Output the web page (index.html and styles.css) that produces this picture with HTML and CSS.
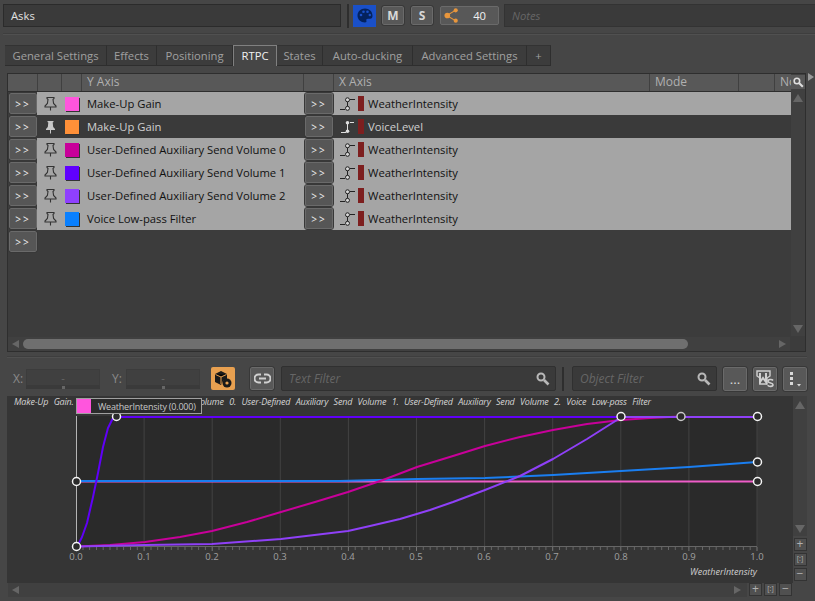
FILE: index.html
```html
<!DOCTYPE html>
<html lang="en">

<head>
    <meta charset="UTF-8">
    <meta name="viewport" content="width=device-width, initial-scale=1.0">
    <title>RTPC</title>
    <link rel="stylesheet" href="styles.css">
</head>

<body>
    <svg class="icon-defs" width="0" height="0">
        <symbol id="pin" viewBox="0 0 15 15">
            <path d="M4 1.500h7v1l-1 1 .6 4 2.400 2.500v1H2v-1l2.400-2.500.6-4-1-1zM7.500 11v3.500" fill="none" stroke="currentColor" stroke-width="1.100"/>
        </symbol>
        <symbol id="pin-solid" viewBox="0 0 15 15">
            <path d="M4.500 2h6v1l-.8.6.5 4.400 1.800 2v1H3v-1l1.800-2 .5-4.400-.8-.6zM7 11h1v3.500H7z" fill="currentColor"/>
        </symbol>
        <symbol id="curve" viewBox="0 0 16 14">
            <path d="M0 12.500h5M10 2.500h5M7.500 3v8" fill="none" stroke="#222" stroke-width="1"/>
            <circle cx="7.500" cy="2.800" r="2" fill="#d8d8d8" stroke="#222" stroke-width="1"/>
            <circle cx="7.500" cy="11.300" r="2" fill="#d8d8d8" stroke="#222" stroke-width="1"/>
        </symbol>
        <symbol id="curve-solid" viewBox="0 0 16 14">
            <path d="M1 12.500h5M10 2.500h4M7.500 3v8" fill="none" stroke="#e0e0e0" stroke-width="1"/>
            <circle cx="7.500" cy="2.800" r="1.800" fill="#e0e0e0"/>
            <circle cx="7.500" cy="11.300" r="1.800" fill="#e0e0e0"/>
        </symbol>
        <symbol id="search" viewBox="0 0 14 14">
            <circle cx="5" cy="5" r="3.500" fill="none" stroke="currentColor" stroke-width="2"/>
            <path d="M8 8l4.500 4.500" stroke="currentColor" stroke-width="2.600"/>
        </symbol>
    </svg>

    <div class="top-bar">
        <div class="name-field">Asks</div>
        <div class="v-sep"></div>
        <button class="btn-palette">
            <svg width="16" height="15" viewBox="0 0 16 15">
                <path d="M8 .5C3.800.5.500 3.500.500 7.500S3.800 14.500 8 14.500c1.300 0 1.700-.8 1.400-1.700-.4-1.100.2-2 1.400-2h2.400c1.500 0 2.300-1.200 2.300-3C15.500 3.500 12.200.5 8 .5z" fill="#04225e"/>
                <circle cx="4" cy="7" r="1.300" fill="#1a50c8"/>
                <circle cx="6.500" cy="3.700" r="1.300" fill="#1a50c8"/>
                <circle cx="10.500" cy="3.700" r="1.300" fill="#1a50c8"/>
                <circle cx="12.800" cy="7" r="1.200" fill="#1a50c8"/>
            </svg>
        </button>
        <button class="btn-tool btn-letter">M</button>
        <button class="btn-tool btn-letter btn-s">S</button>
        <div class="btn-voices">
            <svg width="15" height="15" viewBox="0 0 16 16">
                <path d="M3 8l10-6M3 8l10 6" stroke="#e8963c" stroke-width="1.200"/>
                <circle cx="3.500" cy="8" r="3" fill="#e8963c"/>
                <circle cx="12.500" cy="2.500" r="2.200" fill="#e8963c"/>
                <circle cx="12.500" cy="13.500" r="2.200" fill="#e8963c"/>
            </svg>
            <span>40</span>
        </div>
        <div class="notes-field">Notes</div>
    </div>

    <div class="h-line"></div>

    <div class="tabs">
        <div class="tab tab-general">General Settings</div>
        <div class="tab tab-effects">Effects</div>
        <div class="tab tab-position">Positioning</div>
        <div class="tab tab-rtpc active">RTPC</div>
        <div class="tab tab-states">States</div>
        <div class="tab tab-ducking">Auto-ducking</div>
        <div class="tab tab-advanced">Advanced Settings</div>
        <div class="tab tab-plus">+</div>
    </div>

    <div class="list-panel">
        <div class="list-main">
            <div class="list-cols">
                <div class="list-header">
                    <div class="hcell c-btn"></div>
                    <div class="hcell c-pin"></div>
                    <div class="hcell c-swatch"></div>
                    <div class="hcell c-y">Y Axis</div>
                    <div class="hcell c-btn2"></div>
                    <div class="hcell c-x">X Axis</div>
                    <div class="hcell c-mode">Mode</div>
                    <div class="hcell c-blank"></div>
                    <div class="hcell c-note">No</div>
                </div>
                <div class="row">
                    <button class="btn-more">&gt;&gt;</button>
                    <div class="row-body">
                        <svg class="pin"><use href="#pin"/></svg>
                        <span class="swatch swatch-pink"></span>
                        <span class="y-name">Make-Up Gain</span>
                        <button class="btn-more btn-more-x">&gt;&gt;</button>
                        <svg class="curve"><use href="#curve"/></svg>
                        <span class="rtpc-mark"></span>
                        <span class="x-name">WeatherIntensity</span>
                    </div>
                </div>
                <div class="row row-selected">
                    <button class="btn-more">&gt;&gt;</button>
                    <div class="row-body">
                        <svg class="pin"><use href="#pin-solid"/></svg>
                        <span class="swatch swatch-orange"></span>
                        <span class="y-name">Make-Up Gain</span>
                        <button class="btn-more btn-more-x">&gt;&gt;</button>
                        <svg class="curve"><use href="#curve-solid"/></svg>
                        <span class="rtpc-mark"></span>
                        <span class="x-name">VoiceLevel</span>
                    </div>
                </div>
                <div class="row">
                    <button class="btn-more">&gt;&gt;</button>
                    <div class="row-body">
                        <svg class="pin"><use href="#pin"/></svg>
                        <span class="swatch swatch-magenta"></span>
                        <span class="y-name">User-Defined Auxiliary Send Volume 0</span>
                        <button class="btn-more btn-more-x">&gt;&gt;</button>
                        <svg class="curve"><use href="#curve"/></svg>
                        <span class="rtpc-mark"></span>
                        <span class="x-name">WeatherIntensity</span>
                    </div>
                </div>
                <div class="row">
                    <button class="btn-more">&gt;&gt;</button>
                    <div class="row-body">
                        <svg class="pin"><use href="#pin"/></svg>
                        <span class="swatch swatch-violet"></span>
                        <span class="y-name">User-Defined Auxiliary Send Volume 1</span>
                        <button class="btn-more btn-more-x">&gt;&gt;</button>
                        <svg class="curve"><use href="#curve"/></svg>
                        <span class="rtpc-mark"></span>
                        <span class="x-name">WeatherIntensity</span>
                    </div>
                </div>
                <div class="row">
                    <button class="btn-more">&gt;&gt;</button>
                    <div class="row-body">
                        <svg class="pin"><use href="#pin"/></svg>
                        <span class="swatch swatch-purple"></span>
                        <span class="y-name">User-Defined Auxiliary Send Volume 2</span>
                        <button class="btn-more btn-more-x">&gt;&gt;</button>
                        <svg class="curve"><use href="#curve"/></svg>
                        <span class="rtpc-mark"></span>
                        <span class="x-name">WeatherIntensity</span>
                    </div>
                </div>
                <div class="row">
                    <button class="btn-more">&gt;&gt;</button>
                    <div class="row-body">
                        <svg class="pin"><use href="#pin"/></svg>
                        <span class="swatch swatch-blue"></span>
                        <span class="y-name">Voice Low-pass Filter</span>
                        <button class="btn-more btn-more-x">&gt;&gt;</button>
                        <svg class="curve"><use href="#curve"/></svg>
                        <span class="rtpc-mark"></span>
                        <span class="x-name">WeatherIntensity</span>
                    </div>
                </div>
                <div class="row row-empty">
                    <button class="btn-more">&gt;&gt;</button>
                </div>
            </div>
            <div class="list-vscroll">
                <div class="search-corner"><svg width="11" height="11"><use href="#search"/></svg></div>
                <div class="arrow-up"></div>
                <div class="spacer"></div>
                <div class="arrow-down"></div>
            </div>
        </div>
        <div class="list-hscroll">
            <div class="arrow-left"></div>
            <div class="hscroll-thumb"></div>
            <div class="spacer"></div>
            <div class="arrow-right"></div>
        </div>
    </div>
    <div class="side-arrow"></div>

    <div class="h-line h-line-mid"></div>

    <div class="graph-toolbar">
        <span class="coord-label">X:</span>
        <div class="coord-field">-</div>
        <span class="coord-label coord-label-y">Y:</span>
        <div class="coord-field">-</div>
        <button class="btn-orange">
            <svg width="18" height="18" viewBox="0 0 18 18">
                <path d="M1 4l6-3 6 3v5l-4 2-2 4-6-3z" fill="#1a1a1a"/>
                <path d="M1.500 4.500L7 7l5.500-2.500M7 7v7" stroke="#e8a050" stroke-width="1"/>
                <circle cx="13" cy="13" r="4.500" fill="#1a1a1a"/>
                <circle cx="13" cy="13" r="1.600" fill="#e8a050"/>
            </svg>
        </button>
        <button class="btn-tool btn-link">
            <svg width="17" height="11" viewBox="0 0 17 11">
                <path d="M7 1.500H4.500a4 4 0 0 0 0 8H7M10 1.500h2.500a4 4 0 0 1 0 8H10M5 5.500h7" fill="none" stroke="#d0d0d0" stroke-width="2"/>
            </svg>
        </button>
        <div class="filter filter-text">
            <span>Text Filter</span>
            <svg width="14" height="14"><use href="#search"/></svg>
        </div>
        <div class="v-sep v-sep-filter"></div>
        <div class="filter filter-object">
            <span>Object Filter</span>
            <svg width="14" height="14"><use href="#search"/></svg>
        </div>
        <button class="btn-tool btn-dots">...</button>
        <button class="btn-tool btn-ms">
            <svg width="18" height="18" viewBox="0 0 18 18">
                <path d="M1 1h13v5l-3 2v6H4V8L1 6z" fill="none" stroke="#d0d0d0" stroke-width="1.400"/>
                <path d="M4 3v9l3-4 3 4V3" fill="none" stroke="#d0d0d0" stroke-width="2"/>
                <path d="M17 10.500c-1-1.500-5-1.300-5 .7 0 2.300 5 1.300 5 3.500 0 2-4 2.200-5.300.5" fill="none" stroke="#d0d0d0" stroke-width="1.600"/>
            </svg>
        </button>
        <button class="btn-tool btn-menu">
            <svg width="14" height="16" viewBox="0 0 14 16">
                <rect x="2" y="1" width="3" height="3" fill="#d8d8d8"/>
                <rect x="2" y="6" width="3" height="3" fill="#d8d8d8"/>
                <rect x="2" y="11" width="3" height="3" fill="#d8d8d8"/>
                <path d="M9 13h4l-2 2.500z" fill="#d8d8d8"/>
            </svg>
        </button>
    </div>

    <div class="graph-panel">
        <div class="graph-main">
            <div class="graph-area">
                <svg class="graph-svg" width="786" height="187" viewBox="7 396 786 187">
                    <rect x="76" y="416" width="681" height="131" fill="#2a2a2a"/>
                    <path d="M144.100 416V547M212.200 416V547M280.300 416V547M348.400 416V547M416.500 416V547M484.600 416V547M552.700 416V547M620.800 416V547M688.900 416V547M757 416V547" stroke="#424242" stroke-width="1"/>
                    <path d="M76.500 416V547" stroke="#b4b4b4" stroke-width="1"/>
                    <path d="M76 546.500H757" stroke="#666" stroke-width="1"/>
                    <path d="M83 547v3M89.600 547v3M96.500 547v3M103.200 547v3M110 547v3M117 547v3M123.600 547v3M130.500 547v3M137.300 547v3M151 547v3M157.700 547v3M164.500 547v3M171.300 547v3M178 547v3M185 547v3M191.800 547v3M198.600 547v3M205.400 547v3M219 547v3M225.800 547v3M232.600 547v3M239.400 547v3M246.200 547v3M253 547v3M259.900 547v3M266.700 547v3M273.500 547v3M287.100 547v3M293.900 547v3M300.700 547v3M307.500 547v3M314.400 547v3M321.200 547v3M328 547v3M334.800 547v3M341.600 547v3M355.200 547v3M362 547v3M368.900 547v3M375.700 547v3M382.500 547v3M389.300 547v3M396.100 547v3M402.900 547v3M409.700 547v3M423.300 547v3M430.200 547v3M437 547v3M443.800 547v3M450.600 547v3M457.400 547v3M464.200 547v3M471 547v3M477.800 547v3M491.400 547v3M498.200 547v3M505 547v3M511.900 547v3M518.700 547v3M525.500 547v3M532.300 547v3M539.100 547v3M545.900 547v3M559.500 547v3M566.300 547v3M573.100 547v3M580 547v3M586.800 547v3M593.600 547v3M600.400 547v3M607.200 547v3M614 547v3M627.600 547v3M634.400 547v3M641.300 547v3M648.100 547v3M654.900 547v3M661.700 547v3M668.500 547v3M675.300 547v3M682.100 547v3M695.700 547v3M702.500 547v3M709.400 547v3M716.200 547v3M723 547v3M729.800 547v3M736.600 547v3M743.400 547v3M750.200 547v3" stroke="#666"/>
                    <path d="M144.100 547v4M212.200 547v4M280.300 547v4M348.400 547v4M416.500 547v4M484.600 547v4M552.700 547v4M620.800 547v4M688.900 547v4M757 547v4" stroke="#777"/>

                    <path d="M76 481.500H757" class="curve-line" stroke="#ee5cc8"/>
                    <polyline points="76,481 340,481 417,479 485,478 553,475 621,471 689,467 757,462" class="curve-line" stroke="#1a7ef0"/>
                    <polyline points="77,546.500 110,545 145,542 180,537 212,531 247,522 281,512 315,502 348,492 383,480 417,467 453,456 485,446 520,437 553,430 587,424 621,420 650,418 680,416.500" class="curve-line" stroke="#c8009a"/>
                    <polyline points="77,547 82,537 87,523 93,497 98,473 103,447 108,428 113,418 117,417 621,417" class="curve-line" stroke="#6000f8"/>
                    <polyline points="77,546.500 145,545 212,544 281,539 348,531 370,526 400,519 430,510 453,502 485,490 520,476 553,459 587,439 617,420 621,417 757,417" class="curve-line" stroke="#8f40f8"/>

                    <circle cx="76.500" cy="481.500" r="4" class="point"/>
                    <circle cx="76.500" cy="546.500" r="4" class="point"/>
                    <circle cx="116.500" cy="416.500" r="4" class="point"/>
                    <circle cx="621" cy="416.500" r="4" class="point"/>
                    <circle cx="681" cy="416.500" r="4" class="point point-dim"/>
                    <circle cx="757.500" cy="416.500" r="4" class="point"/>
                    <circle cx="757.500" cy="462" r="4" class="point"/>
                    <circle cx="757.500" cy="481.500" r="4" class="point"/>

                    <text x="76" y="560" class="axis-num" text-anchor="middle">0.0</text>
                    <text x="144" y="560" class="axis-num" text-anchor="middle">0.1</text>
                    <text x="212" y="560" class="axis-num" text-anchor="middle">0.2</text>
                    <text x="280" y="560" class="axis-num" text-anchor="middle">0.3</text>
                    <text x="348" y="560" class="axis-num" text-anchor="middle">0.4</text>
                    <text x="416" y="560" class="axis-num" text-anchor="middle">0.5</text>
                    <text x="484" y="560" class="axis-num" text-anchor="middle">0.6</text>
                    <text x="552" y="560" class="axis-num" text-anchor="middle">0.7</text>
                    <text x="621" y="560" class="axis-num" text-anchor="middle">0.8</text>
                    <text x="689" y="560" class="axis-num" text-anchor="middle">0.9</text>
                    <text x="757" y="560" class="axis-num" text-anchor="middle">1.0</text>
                    <text x="757" y="575" class="axis-title" text-anchor="end">WeatherIntensity</text>
                </svg>
                <div class="legend">Make-Up Gain. User-Defined Auxiliary Send Volume 0. User-Defined Auxiliary Send Volume 1. User-Defined Auxiliary Send Volume 2. Voice Low-pass Filter</div>
                <div class="point-tip">
                    <span class="tip-swatch"></span>
                    <span>WeatherIntensity (0.000)</span>
                </div>
            </div>
            <div class="graph-hscroll">
                <div class="arrow-left"></div>
                <div class="spacer"></div>
                <div class="arrow-right"></div>
                <div class="graph-zoom-row">
                    <div class="zoom-btn">+</div>
                    <div class="zoom-btn zoom-fit">[:]</div>
                    <div class="zoom-btn">&minus;</div>
                </div>
            </div>
        </div>
        <div class="graph-side">
            <div class="graph-vscroll">
                <div class="arrow-up"></div>
                <div class="spacer"></div>
                <div class="arrow-down"></div>
            </div>
            <div class="zoom-btn">+</div>
            <div class="zoom-btn zoom-fit">[:]</div>
            <div class="zoom-btn">&minus;</div>
        </div>
    </div>
</body>

</html>
```

FILE: styles.css
```css
* {
    box-sizing: border-box;
}

body {
    font-family: "Open Sans", "Noto Sans", sans-serif;
    font-size: 11.25px;
    background-color: #464646;
    color: #c8c8c8;
    margin: 0;
    width: 815px;
    height: 601px;
    overflow: hidden;
    position: relative;
}

button {
    font-family: inherit;
    padding: 0;
    margin: 0;
}

.icon-defs {
    position: absolute;
}

.spacer {
    flex: 1;
}

/* top bar */
.top-bar {
    display: flex;
    align-items: center;
    height: 31px;
    padding: 0 0 0 3px;
}

.name-field {
    width: 338px;
    height: 23px;
    line-height: 21px;
    padding-left: 7px;
    background-color: #3a3a3a;
    border: 1px solid #2b2b2b;
    color: #e0e0e0;
}

.v-sep {
    width: 2px;
    height: 24px;
    background-color: #2e2e2e;
    margin: 0 4px 0 6px;
}

.btn-palette {
    width: 23px;
    height: 22px;
    background-color: #1a50c8;
    border: none;
    display: flex;
    align-items: center;
    justify-content: center;
}

.btn-tool {
    background-color: #585858;
    border: 1px solid #6a6a6a;
    outline: 1px solid #383838;
    outline-offset: 0;
    border-radius: 2px;
    color: #d8d8d8;
    display: flex;
    align-items: center;
    justify-content: center;
}

.btn-letter {
    width: 22px;
    height: 19px;
    margin-left: 6px;
    font-weight: 700;
    font-size: 12px;
}

.btn-s {
    margin-left: 7px;
}

.btn-voices {
    width: 59px;
    height: 19px;
    margin-left: 7px;
    padding: 0 12px 0 3px;
    display: flex;
    align-items: center;
    justify-content: space-between;
    background-color: #585858;
    border: 1px solid #6a6a6a;
    border-radius: 2px;
    color: #f0f0f0;
}

.notes-field {
    flex: 1;
    height: 23px;
    margin-left: 5px;
    padding-left: 7px;
    line-height: 21px;
    background-color: #3a3a3a;
    border: 1px solid #333;
    border-right: none;
    color: #666;
    font-style: italic;
}

.h-line {
    height: 2px;
    margin: 2px 0 0 3px;
    background-color: #3e3e3e;
    border-bottom: 1px solid #505050;
}

/* tabs */
.tabs {
    display: flex;
    height: 21px;
    margin-top: 10px;
    padding-left: 5px;
}

.tab {
    height: 21px;
    line-height: 20px;
    text-align: center;
    background-color: #3c3c3c;
    border-top: 1px solid #333;
    border-right: 1px solid #2e2e2e;
    border-bottom: 1px solid #2e2e2e;
    color: #a0a0a0;
}

.tab.active {
    background-color: #464646;
    border: 1px solid #808080;
    border-bottom: none;
    color: #f0f0f0;
}

.tab-general { width: 102px; }
.tab-effects { width: 50px; }
.tab-position { width: 76px; }
.tab-rtpc { width: 44px; }
.tab-states { width: 46px; }
.tab-ducking { width: 90px; }
.tab-advanced { width: 114px; }
.tab-plus { width: 24px; }

/* rtpc list */
.list-panel {
    margin: 7px 9px 0 7px;
    height: 279px;
    background-color: #3c3c3c;
    border: 1px solid #2e2e2e;
}

.list-main {
    display: flex;
    height: 262px;
}

.list-cols {
    flex: 1;
    min-width: 0;
    overflow: hidden;
}

.list-header {
    display: flex;
    height: 18px;
    background-color: #585858;
    border-bottom: 1px solid #2e2e2e;
}

.hcell {
    flex: none;
    height: 17px;
    line-height: 16px;
    font-size: 12px;
    color: #b0b0b0;
    border-right: 1px solid #404040;
    padding-left: 5px;
    overflow: hidden;
}

.c-btn { width: 30px; }
.c-pin { width: 24px; }
.c-swatch { width: 20px; }
.c-y { width: 222px; }
.c-btn2 { width: 30px; }
.c-x { width: 316px; }
.c-mode { width: 89px; }
.c-blank { width: 36px; }
.c-note { width: 20px; border-right: none; }

.row {
    display: flex;
    height: 23px;
}

.row-body {
    flex: 1;
    display: flex;
    align-items: center;
    height: 23px;
    background-color: #a5a5a5;
    color: #111;
}

.row-selected .row-body {
    background-color: #3a3a3a;
    color: #d0d0d0;
}

.btn-more {
    flex: none;
    width: 28px;
    height: 21px;
    margin: 1px 0 0 1px;
    background-color: #565656;
    border: 1px solid #6a6a6a;
    outline: 1px solid #383838;
    border-radius: 2px;
    color: #f0f0f0;
    font-size: 10px;
    letter-spacing: 2px;
    line-height: 18px;
}

.pin {
    width: 15px;
    height: 15px;
    margin-left: 6px;
    color: #333;
}

.row-selected .pin {
    color: #c8c8c8;
}

.swatch {
    width: 14px;
    height: 14px;
    margin-left: 7px;
    box-shadow: 1px 1px 0 #333;
}

.swatch-pink { background-color: #ff55dd; }
.swatch-orange { background-color: #ff9038; }
.swatch-magenta { background-color: #c8009a; }
.swatch-violet { background-color: #6000ff; }
.swatch-purple { background-color: #8f40ff; }
.swatch-blue { background-color: #0a80ff; }

.y-name {
    width: 218px;
    margin-left: 8px;
    white-space: nowrap;
}

.btn-more-x {
    margin: 0;
}

.curve {
    width: 16px;
    height: 14px;
    margin-left: 7px;
}

.rtpc-mark {
    width: 6px;
    height: 15px;
    margin-left: 2px;
    background-color: #7d1f1f;
}

.x-name {
    margin-left: 4px;
}

.list-vscroll {
    width: 14px;
    display: flex;
    flex-direction: column;
    align-items: center;
    background-color: #404040;
}

.search-corner {
    width: 14px;
    height: 14px;
    margin-top: 1px;
    display: flex;
    align-items: center;
    justify-content: center;
    background-color: #585858;
    color: #e0e0e0;
}

.side-arrow {
    position: absolute;
    left: 808px;
    top: 73px;
    width: 0;
    height: 0;
    border-top: 4px solid transparent;
    border-bottom: 4px solid transparent;
    border-left: 6px solid #999;
}

.arrow-up,
.arrow-down {
    width: 0;
    height: 0;
    border-left: 5px solid transparent;
    border-right: 5px solid transparent;
}

.arrow-up {
    margin-top: 5px;
    border-bottom: 8px solid #666;
}

.arrow-down {
    margin-bottom: 3px;
    border-top: 8px solid #666;
}

.list-hscroll,
.graph-hscroll {
    display: flex;
    align-items: center;
    height: 14px;
    background-color: #404040;
}

.list-hscroll {
    margin-top: 1px;
    margin-right: 15px;
}

.arrow-left,
.arrow-right {
    width: 0;
    height: 0;
    border-top: 4px solid transparent;
    border-bottom: 4px solid transparent;
}

.arrow-left {
    margin-left: 4px;
    border-right: 7px solid #666;
}

.arrow-right {
    margin-right: 4px;
    border-left: 7px solid #666;
}

.hscroll-thumb {
    width: 665px;
    height: 10px;
    margin-left: 4px;
    border-radius: 5px;
    background-color: #6f6f6f;
}

.h-line-mid {
    margin: 4px 8px 0 7px;
}

/* graph toolbar */
.graph-toolbar {
    display: flex;
    align-items: center;
    height: 25px;
    margin-top: 8px;
    padding-left: 13px;
}

.coord-label {
    width: 13px;
    font-size: 12px;
    color: #8a8a8a;
}

.coord-label-y {
    width: 14px;
    margin-left: 12px;
}

.coord-field {
    position: relative;
    width: 74px;
    height: 20px;
    text-align: center;
    line-height: 15px;
    color: #666;
    background-color: #404040;
    border: 1px solid #3c3c3c;
    border-bottom: 4px solid #3a3a3a;
}

.coord-field::after {
    content: "";
    position: absolute;
    left: 35px;
    bottom: -4px;
    width: 3px;
    height: 3px;
    background-color: #666;
}

.btn-orange {
    width: 24px;
    height: 23px;
    margin-left: 11px;
    background-color: #e8a050;
    border: none;
    border-radius: 2px;
    display: flex;
    align-items: center;
    justify-content: center;
}

.btn-link {
    width: 24px;
    height: 23px;
    margin-left: 15px;
}

.filter {
    height: 25px;
    display: flex;
    align-items: center;
    justify-content: space-between;
    padding: 0 5px 0 7px;
    background-color: #3a3a3a;
    border: 1px solid #303030;
    border-radius: 2px;
    color: #666;
    font-size: 12px;
    font-style: italic;
}

.filter svg {
    color: #b8b8b8;
}

.filter-text {
    width: 275px;
    margin-left: 7px;
}

.v-sep-filter {
    margin: 0 8px 0 6px;
}

.filter-object {
    width: 145px;
}

.btn-dots,
.btn-ms,
.btn-menu {
    width: 24px;
    height: 24px;
    margin-left: 6px;
}

/* graph */
.graph-panel {
    display: flex;
    height: 201px;
    margin: 5px 0 0 7px;
}

.graph-main {
    width: 786px;
}

.graph-area {
    position: relative;
    width: 786px;
    height: 187px;
    background-color: #353535;
}

.graph-svg {
    display: block;
}

.curve-line {
    fill: none;
    stroke-width: 2;
    stroke-linejoin: round;
}

.point {
    fill: #2a2a2a;
    stroke: #f4f4f4;
    stroke-width: 1.500;
}

.point-dim {
    stroke: #c8c8c8;
}

.axis-num {
    font-size: 9.500px;
    fill: #a0a0a0;
}

.axis-title {
    font-size: 9px;
    font-style: italic;
    fill: #d0d0d0;
}

.legend {
    position: absolute;
    left: 7px;
    top: 0;
    font-size: 9px;
    line-height: 12px;
    font-style: italic;
    color: #d4d4d4;
    letter-spacing: -.2px;
    word-spacing: 3.300px;
    white-space: nowrap;
}

.point-tip {
    position: absolute;
    left: 69px;
    top: 2px;
    width: 126px;
    height: 16px;
    display: flex;
    align-items: center;
    gap: 7px;
    background-color: #2b2b2b;
    border: 1px solid #a0a0a0;
    font-size: 9px;
    letter-spacing: -.2px;
    color: #c8c8c8;
    white-space: nowrap;
}

.tip-swatch {
    width: 14px;
    height: 14px;
    background-color: #ff55dd;
}

.graph-hscroll {
    width: 784px;
    margin-left: 1px;
    border: none;
}

.graph-hscroll .arrow-right {
    margin-right: 6px;
}

.graph-zoom-row {
    display: flex;
    gap: 2px;
    height: 14px;
    padding-left: 2px;
    background-color: #464646;
}

.graph-side {
    width: 14px;
    display: flex;
    flex-direction: column;
    align-items: center;
    gap: 2px;
}

.graph-vscroll {
    width: 14px;
    height: 140px;
    display: flex;
    flex-direction: column;
    align-items: center;
    background-color: #404040;
}

.zoom-btn {
    width: 13px;
    height: 13px;
    line-height: 10px;
    text-align: center;
    font-size: 12px;
    color: #b0b0b0;
    background-color: #505050;
    border: 1px solid #333;
}

.zoom-fit {
    font-size: 7px;
}
```
